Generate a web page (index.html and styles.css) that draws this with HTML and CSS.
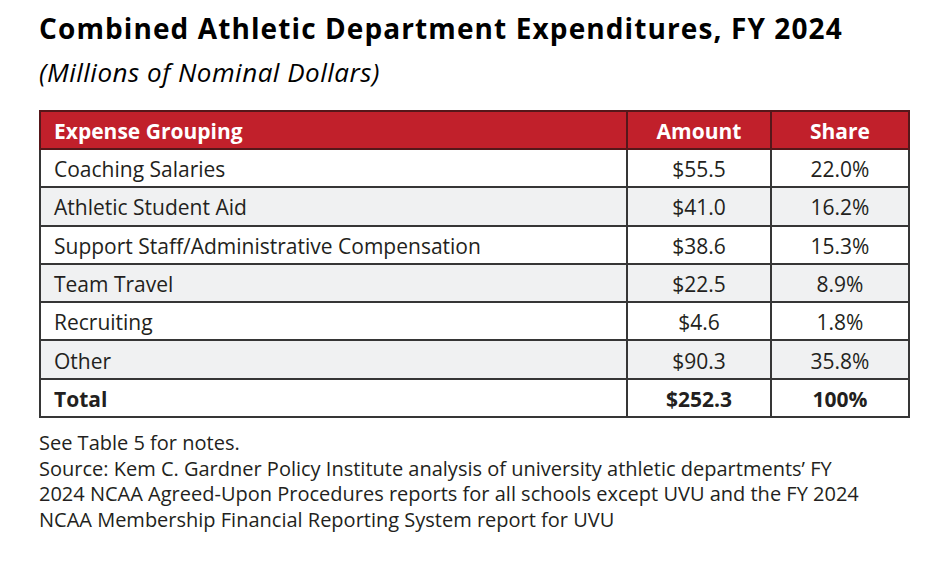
FILE: index.html
```html
<!DOCTYPE html>
<html lang="en">
<head>
<meta charset="utf-8">
<title>Combined Athletic Department Expenditures, FY 2024</title>
<link rel="stylesheet" href="styles.css">
</head>
<body>
<div class="page">
  <h1 class="title">Combined Athletic Department Expenditures, FY 2024</h1>
  <p class="subtitle">(Millions of Nominal Dollars)</p>
  <table class="data">
    <thead>
      <tr>
        <th class="c-name">Expense Grouping</th>
        <th class="c-num">Amount</th>
        <th class="c-share">Share</th>
      </tr>
    </thead>
    <tbody>
      <tr><td class="c-name">Coaching Salaries</td><td class="c-num">$55.5</td><td class="c-share">22.0%</td></tr>
      <tr class="alt"><td class="c-name">Athletic Student Aid</td><td class="c-num">$41.0</td><td class="c-share">16.2%</td></tr>
      <tr><td class="c-name">Support Staff/Administrative Compensation</td><td class="c-num">$38.6</td><td class="c-share">15.3%</td></tr>
      <tr class="alt"><td class="c-name">Team Travel</td><td class="c-num">$22.5</td><td class="c-share">8.9%</td></tr>
      <tr><td class="c-name">Recruiting</td><td class="c-num">$4.6</td><td class="c-share">1.8%</td></tr>
      <tr class="alt"><td class="c-name">Other</td><td class="c-num">$90.3</td><td class="c-share">35.8%</td></tr>
      <tr class="total"><td class="c-name">Total</td><td class="c-num">$252.3</td><td class="c-share">100%</td></tr>
    </tbody>
  </table>
  <div class="notes">
    <p>See Table 5 for notes.</p>
    <p>Source: Kem C. Gardner Policy Institute analysis of university athletic departments’ FY<br>2024 NCAA Agreed-Upon Procedures reports for all schools except UVU and the FY 2024<br>NCAA Membership Financial Reporting System report for UVU</p>
  </div>
</div>
</body>
</html>
```

FILE: styles.css
```css
html, body {
  margin: 0;
  padding: 0;
  background: #ffffff;
}

.page {
  padding: 12px 0 0 39px;
  width: 880px;
  font-family: "Open Sans", "Noto Sans", "Liberation Sans", sans-serif;
  color: #231f20;
}

.title {
  margin: 0;
  font-size: 28px;
  line-height: 32px;
  font-weight: 700;
  color: #000000;
  letter-spacing: 1.1px;
  white-space: nowrap;
}

.subtitle {
  margin: 12px 0 0 0;
  font-size: 26px;
  line-height: 32px;
  font-style: italic;
  color: #000000;
  letter-spacing: 0.5px;
}

.data {
  margin-top: 22px;
  width: 869px;
  border-collapse: collapse;
  table-layout: fixed;
  font-size: 21px;
  border: 2px solid #363636;
}

.data th,
.data td {
  height: 38.3px;
  padding: 2px 0 0 13px;
  box-sizing: border-box;
  border: 2px solid #363636;
  white-space: nowrap;
}

.data thead th {
  background: #c1202b;
  color: #ffffff;
  font-weight: 700;
  text-align: left;
  border-color: #55171a;
  height: 38px;
}

.data .c-name { width: 587px; text-align: left; }
.data .c-num { width: 144px; text-align: center; padding-left: 0; }
.data .c-share { width: 138px; text-align: center; padding-left: 0; }

.data thead th.c-num,
.data thead th.c-share { text-align: center; }

.data tbody tr.alt td { background: #f0f1f2; }
.data tbody tr.total td { font-weight: 700; }

.notes {
  margin-top: 12px;
  font-size: 20px;
  line-height: 25.5px;
  color: #231f20;
}

.notes p {
  margin: 0;
  white-space: nowrap;
}
```
